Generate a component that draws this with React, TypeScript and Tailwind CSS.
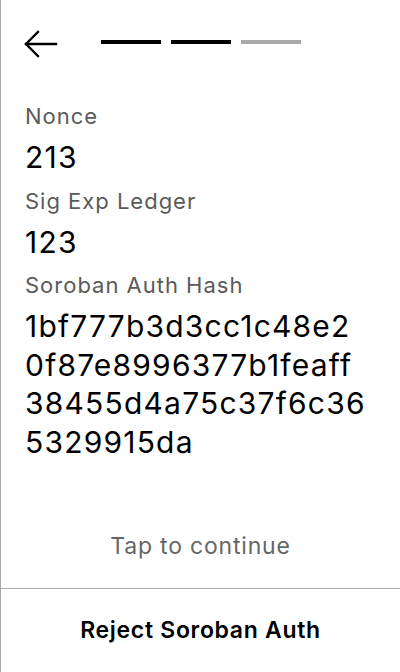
const hashLines = ["1bf777b3d3cc1c48e2", "0f87e8996377b1feaff", "38455d4a75c37f6c36", "5329915da"];

const fields = [
  { label: "Nonce", value: ["213"] },
  { label: "Sig Exp Ledger", value: ["123"] },
  { label: "Soroban Auth Hash", value: hashLines },
];

function BackArrow() {
  return (
    <svg width="34" height="28" viewBox="0 0 34 28" fill="none" stroke="black" strokeWidth="2.3" strokeLinecap="square">
      <path d="M2 14H32" />
      <path d="M14 2L2 14L14 26" />
    </svg>
  );
}

function Progress() {
  return (
    <div className="flex gap-[10px] ml-[43px] mt-[10px]">
      <div className="w-[60px] h-[3.5px] bg-black" />
      <div className="w-[60px] h-[3.5px] bg-black" />
      <div className="w-[60px] h-[3.5px] bg-[#aaaaaa]" />
    </div>
  );
}

export default function App() {
  return (
    <div className="w-[400px] h-[672px] bg-white border-l border-[#aaaaaa] flex flex-col text-black font-['Inter',sans-serif]">
      <div className="flex items-start pl-[23px] pt-[30px]">
        <BackArrow />
        <Progress />
      </div>

      <div className="px-6 mt-[44px]">
        {fields.map((f) => (
          <div key={f.label} className="mb-[10px]">
            <div className="text-[22px] leading-[28px] text-[#5a5a5a] tracking-[0.045em]">{f.label}</div>
            <div className="text-[30px] leading-[38.5px] mt-[8px] tracking-[0.04em]">
              {f.value.map((line) => (
                <div key={line}>{line}</div>
              ))}
            </div>
          </div>
        ))}
      </div>

      <div className="flex-1" />
      <div className="text-center text-[23px] leading-[28px] text-[#666666] mb-[28px] tracking-[0.035em]">Tap to continue</div>
      <button className="h-[84px] border-t border-[#aaaaaa] text-[23px] font-semibold flex items-center justify-center tracking-[0.03em]">
        Reject Soroban Auth
      </button>
    </div>
  );
}
